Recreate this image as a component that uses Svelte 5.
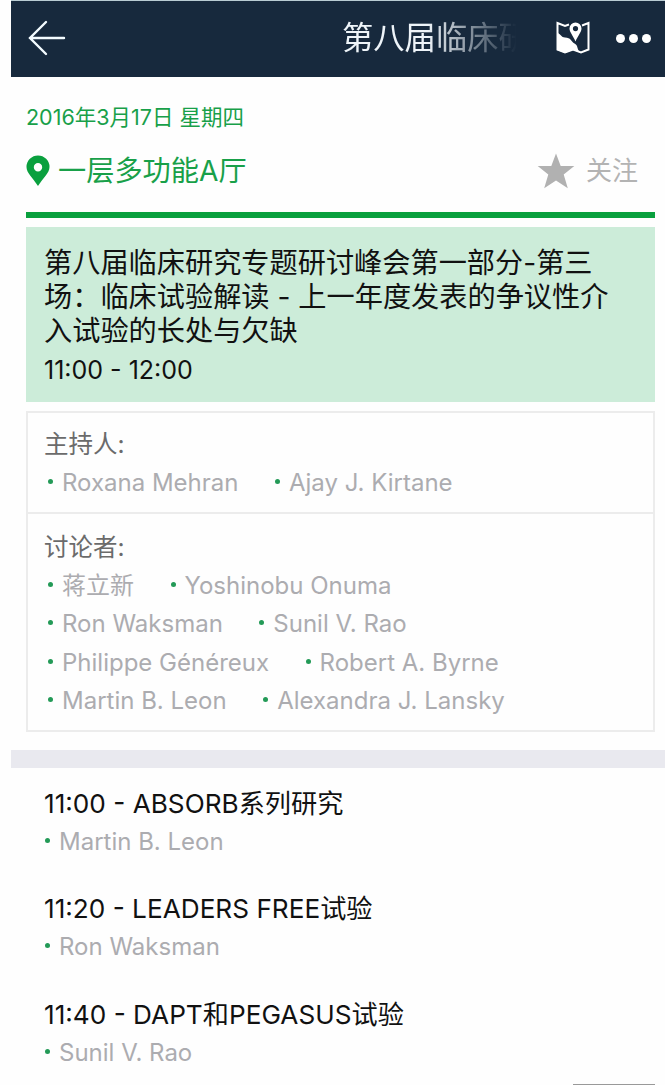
<script lang="ts">
  type Group = { label: string; rows: string[][] };
  type Talk = { time: string; title: string; speaker: string };

  const groups: Group[] = [
    { label: '主持人:', rows: [['Roxana Mehran', 'Ajay J. Kirtane']] },
    {
      label: '讨论者:',
      rows: [
        ['蒋立新', 'Yoshinobu Onuma'],
        ['Ron Waksman', 'Sunil V. Rao'],
        ['Philippe Généreux', 'Robert A. Byrne'],
        ['Martin B. Leon', 'Alexandra J. Lansky']
      ]
    }
  ];

  const talks: Talk[] = [
    { time: '11:00', title: 'ABSORB系列研究', speaker: 'Martin B. Leon' },
    { time: '11:20', title: 'LEADERS FREE试验', speaker: 'Ron Waksman' },
    { time: '11:40', title: 'DAPT和PEGASUS试验', speaker: 'Sunil V. Rao' }
  ];

  const titleLines = [
    '第八届临床研究专题研讨峰会第一部分-第三',
    '场：临床试验解读 - 上一年度发表的争议性介',
    '入试验的长处与欠缺'
  ];

  let followed = $state(false);
</script>

<div class="page">
  <header class="bar">
    <button type="button" class="back" aria-label="返回">
      <svg width="38" height="36" viewBox="0 0 38 36">
        <path d="M18 2 2 18 18 34M2 18H36" />
      </svg>
    </button>
    <h1>第八届临床研</h1>
    <button type="button" class="map" aria-label="地图">
      <svg width="34" height="34" viewBox="0 0 34 34">
        <path class="outline" d="M13 3.5 9 5 1.5 2V28.5L9 31.5 17 28.5 25 31.5 32.5 28.5V2L26 4.5" />
        <path
          class="land"
          d="M1 11.5C5 13 5 16.5 9 16.5C15 16.5 15 20.5 18.5 22.5C23 25 20 28.5 25 32L17 29 9 32 1 29Z"
        />
        <path
          class="land"
          fill-rule="evenodd"
          d="M19.5 1.5A6 6 0 0 0 13.5 7.5C13.5 11 17 14.5 19.5 20.5C22 14.5 25.5 11 25.5 7.5A6 6 0 0 0 19.5 1.5ZM19.5 5A2.6 2.6 0 1 1 19.5 10.2A2.6 2.6 0 1 1 19.5 5Z"
        />
      </svg>
    </button>
    <button type="button" class="more" aria-label="更多"><i></i><i></i><i></i></button>
  </header>

  <main>
    <p class="date">2016年3月17日 星期四</p>
    <div class="venue">
      <svg class="pin" width="24" height="32" viewBox="0 0 24 32">
        <path
          fill-rule="evenodd"
          d="M12 0.5A11.5 11.5 0 0 0 0.5 12C0.5 18 7 23 12 31C17 23 23.5 18 23.5 12A11.5 11.5 0 0 0 12 0.5ZM12 8A4.2 4.2 0 1 1 12 16.4A4.2 4.2 0 1 1 12 8Z"
        />
      </svg>
      <span class="room">一层多功能A厅</span>
      <button
        type="button"
        class="follow"
        class:followed
        aria-pressed={followed}
        onclick={() => (followed = !followed)}
      >
        <svg width="38" height="36" viewBox="0 0 38 36">
          <path
            d="M19 0.5 23.7 13H37.3L26.7 21.5 30.8 35.3 19 27.5 7.2 35.3 11.3 21.5 0.7 13H14.3Z"
          />
        </svg>
        <span>关注</span>
      </button>
    </div>

    <section class="session">
      <h2>
        {#each titleLines as line}
          <span>{line}</span>
        {/each}
      </h2>
      <p class="time">11:00 - 12:00</p>
    </section>

    <section class="people">
      {#each groups as group (group.label)}
        <div class="group">
          <h3>{group.label}</h3>
          {#each group.rows as row}
            <div class="row">
              {#each row as name (name)}
                <span class="name">{name}</span>
              {/each}
            </div>
          {/each}
        </div>
      {/each}
    </section>
  </main>

  <div class="band"></div>

  <section class="talks">
    {#each talks as talk (talk.time)}
      <article>
        <h3>{talk.time} - {talk.title}</h3>
        <span class="name">{talk.speaker}</span>
      </article>
    {/each}
  </section>

  <div class="float"></div>
</div>

<style>
  :global(body) {
    background: #fefefe;
  }
  .page {
    position: relative;
    box-sizing: border-box;
    width: 665px;
    height: 1085px;
    padding-left: 11px;
    overflow: hidden;
    color: #111;
    font-family: Inter, 'Noto Sans CJK SC', sans-serif;
  }
  h1,
  h2,
  h3,
  p {
    margin: 0;
    font-weight: 400;
    white-space: nowrap;
  }
  button {
    padding: 0;
    border: 0;
    background: none;
    font: inherit;
    cursor: pointer;
  }
  svg {
    display: block;
  }
  .bar {
    box-sizing: border-box;
    display: flex;
    align-items: center;
    height: 77px;
    padding: 0 14px 2px 17px;
    border-top: 1px solid #b9ccd3;
    background: #17293d;
  }
  .back path {
    fill: none;
    stroke: #f3fbff;
    stroke-width: 2.4;
    stroke-linecap: round;
  }
  .bar h1 {
    width: 190px;
    margin-left: auto;
    color: #eef4f9;
    font-size: 31.3px;
    line-height: 46px;
    -webkit-mask-image: linear-gradient(90deg, #000 45%, transparent 92%);
    mask-image: linear-gradient(90deg, #000 45%, transparent 92%);
  }
  .map {
    margin-left: 24px;
  }
  .outline {
    fill: none;
    stroke: #fff;
    stroke-width: 2;
  }
  .land {
    fill: #fff;
  }
  .more {
    display: flex;
    gap: 4px;
    margin-left: 26px;
  }
  .more i {
    width: 9px;
    height: 9px;
    border-radius: 50%;
    background: #fff;
  }
  main {
    padding: 25px 10px 0 15px;
  }
  .date {
    color: #18a049;
    font-size: 21.5px;
    line-height: 30px;
  }
  .venue {
    box-sizing: border-box;
    display: flex;
    align-items: center;
    height: 86px;
    padding-bottom: 3px;
    border-bottom: 6px solid #0aa03e;
    color: #18a049;
  }
  .pin {
    margin: 0 8px 0 0;
    fill: #0aa03e;
  }
  .room {
    font-size: 28.2px;
    line-height: 36px;
  }
  .follow {
    display: flex;
    align-items: center;
    gap: 11px;
    margin: 0 17px 0 auto;
    color: #b3b3b3;
    font-size: 26px;
    line-height: 36px;
  }
  .follow svg {
    fill: #b1b1b1;
  }
  .followed {
    color: #18a049;
  }
  .followed svg {
    fill: #18a049;
  }
  .session {
    box-sizing: border-box;
    height: 175px;
    margin-top: 9px;
    padding: 19px 18px 0;
    background: #ccecd9;
  }
  .session h2 {
    font-size: 28.2px;
    line-height: 34px;
  }
  .session h2 span {
    display: block;
  }
  .time {
    margin-top: 4px;
    font-size: 25px;
    line-height: 36px;
  }
  .people {
    margin-top: 9px;
    border: 2px solid #ececec;
  }
  .group {
    padding: 12px 16px 9px;
  }
  .group + .group {
    padding-top: 14px;
    border-top: 2px solid #ececec;
  }
  .group h3 {
    color: #6b6b6b;
    font-size: 24.5px;
    line-height: 39px;
  }
  .row {
    display: flex;
    gap: 36.5px;
    height: 38.5px;
    padding-left: 4px;
  }
  .name {
    display: flex;
    align-items: center;
    color: #acacb0;
    font-size: 24px;
    line-height: 38.5px;
    white-space: nowrap;
  }
  .name::before {
    width: 5px;
    height: 5px;
    margin: -3px 9px 0 0;
    border-radius: 50%;
    background: #239a57;
    content: '';
  }
  .band {
    height: 18px;
    margin-top: 18px;
    background: #e9e9ef;
  }
  .talks {
    padding: 17px 33px 0;
  }
  .talks article {
    height: 105.7px;
  }
  .talks h3 {
    font-size: 26.2px;
    line-height: 38px;
  }
  .talks .name {
    padding-left: 1px;
  }
  .float {
    position: absolute;
    bottom: 0;
    left: 573px;
    width: 82px;
    height: 1px;
    background: #999;
  }
</style>
